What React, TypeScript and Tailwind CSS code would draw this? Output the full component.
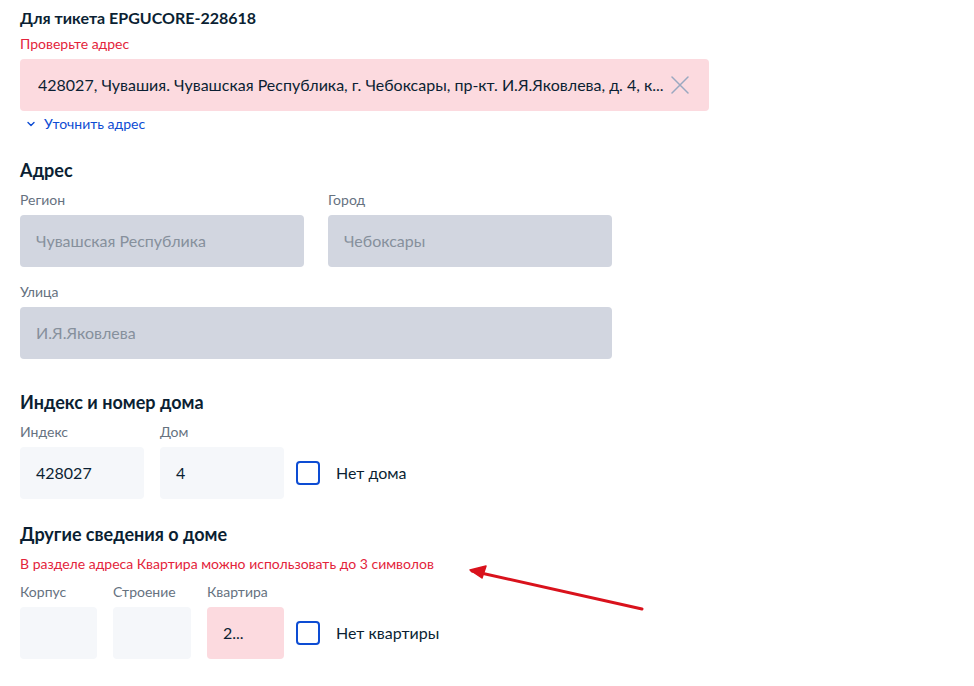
import React from 'react';

function Label({ children }: { children: React.ReactNode }) {
  return <div className="text-[14px] leading-5 text-[#66727f]">{children}</div>;
}

function Field({
  label,
  value,
  className,
  variant = 'default',
}: {
  label: string;
  value?: string;
  className: string;
  variant?: 'default' | 'disabled' | 'error';
}) {
  const bg =
    variant === 'disabled'
      ? 'bg-[#d2d6e0] text-[#86909c]'
      : variant === 'error'
      ? 'bg-[#fcdadf] text-[#0b1f33]'
      : 'bg-[#f5f7fa] text-[#0b1f33]';
  return (
    <div className={`flex flex-col gap-[5px] ${className}`}>
      <Label>{label}</Label>
      <div className={`h-[52px] rounded-[4px] flex items-center px-4 text-[16px] ${bg}`}>{value}</div>
    </div>
  );
}

function Checkbox({ label }: { label: string }) {
  return (
    <div className="flex items-center h-[52px] ml-[-4px] self-end">
      <div className="w-6 h-6 rounded-[4px] border-2 border-[#0d4cd3] bg-white" />
      <span className="ml-4 text-[16px] text-[#0b1f33]">{label}</span>
    </div>
  );
}

export default function App() {
  return (
    <div
      className="relative w-[974px] h-[686px] bg-white overflow-hidden"
      style={{ fontFamily: 'Lato, "Noto Sans", sans-serif' }}
    >
      <div className="pl-5 pt-[6px] w-[709px]">
        {/* Ticket */}
        <div className="text-[16px] leading-6 font-bold text-[#0b1f33]">Для тикета EPGUCORE-228618</div>
        <div className="mt-1 text-[14px] leading-5 text-[#e3243b]">Проверьте адрес</div>
        <div className="mt-[5px] h-[52px] rounded-[4px] bg-[#fcdadf] flex items-center pl-[18px] pr-5">
          <span className="flex-1 truncate text-[16px] text-[#0b1f33]">
            428027, Чувашия. Чувашская Республика, г. Чебоксары, пр-кт. И.Я.Яковлева, д. 4, к...
          </span>
          <svg width="18" height="18" viewBox="0 0 18 18" className="shrink-0">
            <path d="M1 1L17 17M17 1L1 17" stroke="#9aa8c0" strokeWidth="1.5" strokeLinecap="round" />
          </svg>
        </div>
        <div className="mt-[3px] flex items-center text-[14px] leading-5 text-[#0d4cd3]">
          <svg width="8" height="6" viewBox="0 0 8 6" className="ml-[7px] mr-[9px]">
            <path d="M1 1.5L4 4.5L7 1.5" stroke="#0d4cd3" strokeWidth="1.4" fill="none" strokeLinecap="round" strokeLinejoin="round" />
          </svg>
          Уточнить адрес
        </div>

        {/* Address */}
        <div className="mt-6 text-[18px] leading-6 font-bold text-[#0b1f33]">Адрес</div>
        <div className="mt-2 flex gap-6">
          <Field label="Регион" value="Чувашская Республика" variant="disabled" className="w-[284px]" />
          <Field label="Город" value="Чебоксары" variant="disabled" className="w-[284px]" />
        </div>
        <Field label="Улица" value="И.Я.Яковлева" variant="disabled" className="mt-[15px] w-[592px]" />

        {/* Index */}
        <div className="mt-[31px] text-[18px] leading-6 font-bold text-[#0b1f33]">Индекс и номер дома</div>
        <div className="mt-2 flex gap-4">
          <Field label="Индекс" value="428027" className="w-[124px]" />
          <Field label="Дом" value="4" className="w-[124px]" />
          <Checkbox label="Нет дома" />
        </div>

        {/* Other */}
        <div className="mt-[23px] text-[18px] leading-6 font-bold text-[#0b1f33]">Другие сведения о доме</div>
        <div className="mt-2 text-[14px] leading-5 text-[#e3243b]">
          В разделе адреса Квартира можно использовать до 3 символов
        </div>
        <div className="mt-2 flex gap-4">
          <Field label="Корпус" className="w-[77px]" />
          <Field label="Строение" className="w-[78px]" />
          <Field label="Квартира" value="2..." variant="error" className="w-[77px]" />
          <Checkbox label="Нет квартиры" />
        </div>
      </div>

      {/* annotation arrow */}
      <svg className="absolute left-0 top-0 pointer-events-none" width="974" height="686">
        <path d="M642 609L472 571" stroke="#d9121c" strokeWidth="3" strokeLinecap="round" />
        <path d="M470 570L486 566L482 578Z" fill="#d9121c" stroke="#d9121c" strokeWidth="1.5" strokeLinejoin="round" />
      </svg>
    </div>
  );
}
